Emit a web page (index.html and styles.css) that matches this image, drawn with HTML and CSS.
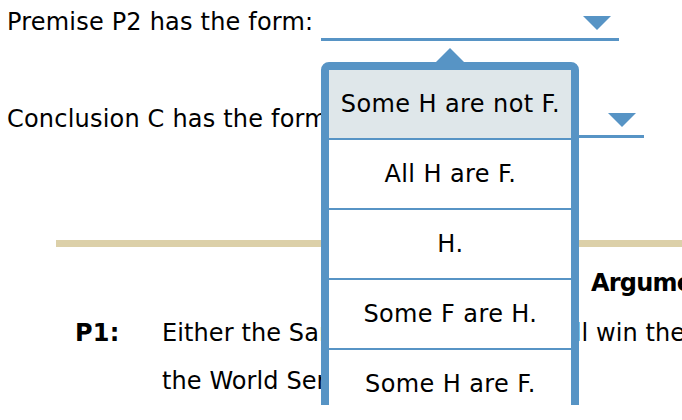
FILE: index.html
```html
<!DOCTYPE html>
<html lang="en">
<head>
<meta charset="utf-8">
<title>Argument form</title>
<link rel="stylesheet" href="styles.css">
</head>
<body>
<div class="page">
  <div class="row row1">
    <span class="label">Premise P2 has the form:</span>
    <div class="select s1">
      <span class="arrow"></span>
      <div class="popup">
        <span class="caret"></span>
        <div class="opt active">Some H are not F.</div>
        <div class="opt">All H are F.</div>
        <div class="opt">H.</div>
        <div class="opt">Some F are H.</div>
        <div class="opt">Some H are F.</div>
        <div class="opt">No H are F.</div>
      </div>
    </div>
  </div>
  <div class="row row2">
    <span class="label">Conclusion C has the form:</span>
    <div class="select s2"><span class="arrow"></span></div>
  </div>
  <section class="argument">
    <div class="rule"></div>
    <div class="heading">Argument</div>
    <div class="premise">
      <span class="pnum">P1:</span>
      <span class="ptext">Either the San Francisco Giants will win the pennant or the Boston Red Sox will win<br>the World Series.</span>
    </div>
  </section>
</div>
</body>
</html>
```
FILE: styles.css
```css
html, body {
  margin: 0;
  overflow: hidden;
}
body {
  font-family: "DejaVu Sans", Verdana, sans-serif;
  font-size: 24px;
  letter-spacing: 0.2px;
  color: #000;
  background: #fff;
}
.page {
  padding: 8px 0 0 7px;
}
.row {
  display: flex;
  align-items: flex-start;
}
.row2 {
  margin-top: 64px;
}
.label {
  white-space: nowrap;
  line-height: normal;
}
.select {
  box-sizing: border-box;
  margin-left: 8px;
  height: 33px;
  border-bottom: 3px solid #5794c5;
  display: flex;
  justify-content: flex-end;
  align-items: flex-start;
  padding: 8px 8px 0 0;
  flex: none;
}
.s1 {
  width: 298px;
  position: relative;
}
.s2 {
  width: 300px;
}
.arrow {
  width: 0;
  height: 0;
  border-left: 14px solid transparent;
  border-right: 14px solid transparent;
  border-top: 14px solid #5794c5;
}
.popup {
  position: absolute;
  left: 0;
  top: 54px;
  width: 258px;
  box-sizing: border-box;
  border: 8px solid #5794c5;
  border-radius: 8px 8px 0 0;
  background: #fff;
  z-index: 2;
}
.caret {
  position: absolute;
  top: -22px;
  left: calc(50% - 14px);
  width: 0;
  height: 0;
  border-left: 14px solid transparent;
  border-right: 14px solid transparent;
  border-bottom: 14px solid #5794c5;
}
.opt {
  height: 68px;
  border-bottom: 2px solid #5794c5;
  display: flex;
  align-items: center;
  justify-content: center;
  line-height: normal;
  white-space: nowrap;
  letter-spacing: 0.4px;
}
.opt.active {
  background: #dfe7ea;
}
.argument {
  margin-left: 49px;
  margin-top: 102px;
  width: 1300px;
}
.rule {
  height: 7px;
  background: #dcd0a9;
}
.heading {
  font-weight: bold;
  line-height: 48px;
  margin-top: 12px;
  padding-left: 535px;
  letter-spacing: -0.8px;
}
.premise {
  display: grid;
  grid-template-columns: 87px auto;
  padding-left: 19px;
  line-height: 48px;
  margin-top: 2px;
}
.pnum {
  font-weight: bold;
}
.ptext {
  white-space: nowrap;
  letter-spacing: 0.1px;
}
```
